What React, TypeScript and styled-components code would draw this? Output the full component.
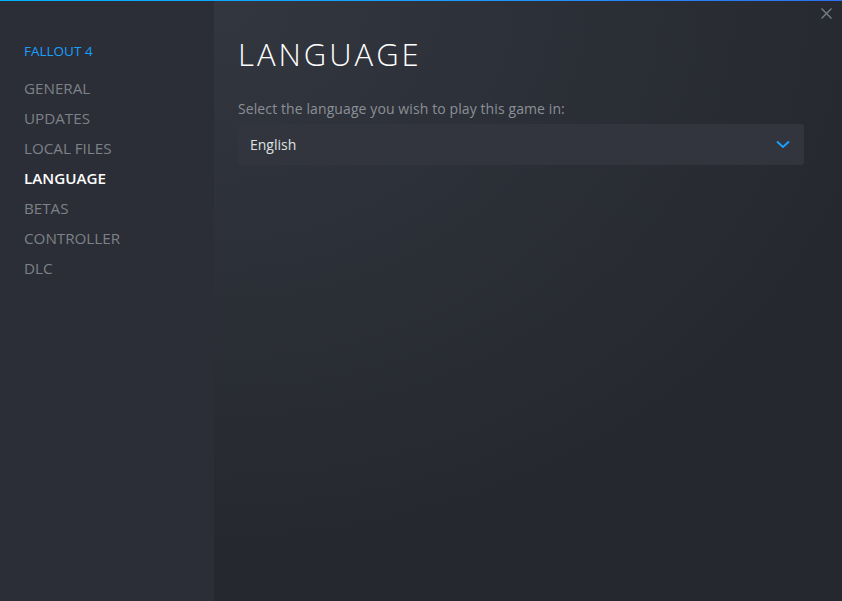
import styled, { createGlobalStyle } from "styled-components";

const GlobalStyle = createGlobalStyle`
    html, body {
        margin: 0;
        padding: 0;
        background: #25282e;
    }
    * {
        box-sizing: border-box;
    }
`

const sections = ["GENERAL", "UPDATES", "LOCAL FILES", "LANGUAGE", "BETAS", "CONTROLLER", "DLC"];

interface ItemProps {
    $active?: boolean
}

function App() {
    return (
        <>
            <GlobalStyle />
            <Window>
                <TopLine />
                <Body>
                    <Sidebar>
                        <GameTitle>FALLOUT 4</GameTitle>
                        {sections.map(name => (
                            <NavItem key={name} $active={name === "LANGUAGE"}>{name}</NavItem>
                        ))}
                    </Sidebar>
                    <Content>
                        <CloseButton aria-label="close">
                            <svg width="11" height="11" viewBox="0 0 11 11">
                                <path d="M0.5 0.5 L10.5 10.5 M10.5 0.5 L0.5 10.5" stroke="#7b8087" strokeWidth="1.3" />
                            </svg>
                        </CloseButton>
                        <Heading>LANGUAGE</Heading>
                        <Label>Select the language you wish to play this game in:</Label>
                        <Dropdown>
                            <span>English</span>
                            <svg width="14" height="9" viewBox="0 0 14 9">
                                <path d="M1 1.5 L7 7 L13 1.5" fill="none" stroke="#1a9fff" strokeWidth="2" />
                            </svg>
                        </Dropdown>
                    </Content>
                </Body>
            </Window>
        </>
    );
}

const Window = styled.div`
    width: 842px;
    height: 601px;
    display: flex;
    flex-direction: column;
    font-family: "Open Sans", "Liberation Sans", sans-serif;
    overflow: hidden;
`

const TopLine = styled.div`
    height: 1px;
    flex: none;
    background: linear-gradient(90deg, #00b4ff 0%, #1a9fff 50%, #2e6ff2 100%);
`

const Body = styled.div`
    flex: 1;
    display: flex;
`

const Sidebar = styled.nav`
    width: 214px;
    flex: none;
    background: #2b2e36;
    padding: 40px 0 0 24px;
    display: flex;
    flex-direction: column;
`

const GameTitle = styled.div`
    font-size: 13.5px;
    line-height: 20px;
    color: #1a9fff;
    margin-bottom: 12px;
`

const NavItem = styled.div<ItemProps>`
    font-size: 15.2px;
    line-height: 30px;
    color: ${(props) => props.$active ? "#ffffff" : "#7d8188"};
    font-weight: ${(props) => props.$active ? 600 : 400};
`

const Content = styled.main`
    position: relative;
    flex: 1;
    padding: 32px 38px 0 24px;
    background:
        radial-gradient(ellipse 700px 560px at 0% 0%, rgba(62, 66, 76, 0.55) 0%, rgba(62, 66, 76, 0) 100%),
        #25282f;
`

const CloseButton = styled.div`
    position: absolute;
    top: 7px;
    right: 10px;
    width: 11px;
    height: 11px;
    display: flex;
`

const Heading = styled.h1`
    margin: 0;
    font-size: 31px;
    font-weight: 300;
    letter-spacing: 3px;
    line-height: 42px;
    color: #ffffff;
`

const Label = styled.div`
    margin-top: 24px;
    font-size: 14px;
    letter-spacing: 0.1px;
    line-height: 20px;
    color: #8b9097;
`

const Dropdown = styled.div`
    margin-top: 5px;
    height: 41px;
    border-radius: 3px;
    background: #32353d;
    padding: 0 14px 0 12px;
    display: flex;
    align-items: center;
    justify-content: space-between;
    font-size: 14px;
    color: #dfe1e3;
`

export default App;
